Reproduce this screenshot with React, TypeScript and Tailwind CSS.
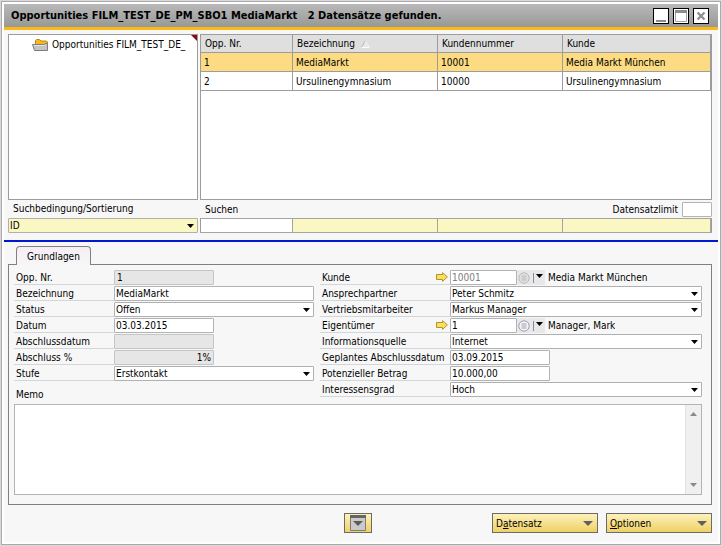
import { useState } from "react";
import type { ReactNode, SelectHTMLAttributes, InputHTMLAttributes } from "react";
import clsx from "clsx";

const opportunities = [
  { nr: "1", name: "MediaMarkt", customerNr: "10001", customer: "Media Markt München" },
  { nr: "2", name: "Ursulinengymnasium", customerNr: "10000", customer: "Ursulinengymnasium" },
];

const searchColumns = ["Opp. Nr.", "Bezeichnung", "Kundennummer", "Kunde"];

function CaretDown({ className = "w-[7px] h-1" }: { className?: string }) {
  return (
    <svg viewBox="0 0 8 4" preserveAspectRatio="none" className={className} fill="currentColor" aria-hidden="true">
      <path d="M0 0h8L4 4z" />
    </svg>
  );
}

function FolderIcon() {
  return (
    <svg viewBox="0 0 16 12" className="h-3 w-4 shrink-0" aria-hidden="true">
      <path d="M3.500 6V1.500L4.500.5h3l1.500 1.500h5.500l1 1V8z" fill="#fbb80f" stroke="#b08a30" />
      <path d="M.5 5.500h11.500L13 4.500h2.500v7H2.500z" fill="#c4c4c4" stroke="#7d7d7d" />
      <path d="M2 6.500h10" stroke="#e6e6e6" />
    </svg>
  );
}

function LinkArrow() {
  return (
    <svg viewBox="0 0 12 10" className="h-[10px] w-3" aria-hidden="true">
      <path d="M.5 2.500h6V.6L11.400 5 6.500 9.400V7.500h-6z" fill="#f7df60" stroke="#b4942a" />
    </svg>
  );
}

function ListIcon({ muted }: { muted?: boolean }) {
  const stroke = muted ? "#b8b8b8" : "#a0a0b0";
  return (
    <svg viewBox="0 0 12 12" className="h-3 w-3" aria-hidden="true">
      <circle cx="6" cy="6" r="5.200" fill={muted ? "#e2e2e2" : "#f3f3f8"} stroke={stroke} />
      <path d="M3.500 4h5M3.500 6h5M3.500 8h5" stroke={stroke} />
    </svg>
  );
}

function SelectBox({ className, options, ...rest }: SelectHTMLAttributes<HTMLSelectElement> & { options: string[] }) {
  return (
    <div className="relative w-full">
      <select
        {...rest}
        className={clsx(
          "block h-[15px] w-full appearance-none rounded-[1px] border border-[#b0b0b0] pl-px pr-4 leading-[13px] outline-none",
          className
        )}
      >
        {options.map((o) => (
          <option key={o}>{o}</option>
        ))}
      </select>
      <CaretDown className="pointer-events-none absolute right-1 top-[6px] h-1 w-[7px]" />
    </div>
  );
}

function TextBox({ className, ...rest }: InputHTMLAttributes<HTMLInputElement>) {
  return (
    <input
      type="text"
      {...rest}
      className={clsx(
        "block h-[15px] rounded-[1px] border px-px leading-[13px] outline-none",
        rest.readOnly ? "border-[#c3c6c6] bg-[#e6e6e6]" : "border-[#b0b4b4] bg-white",
        className
      )}
    />
  );
}

interface FieldProps {
  id: string;
  label: string;
  wide?: boolean;
  arrow?: boolean;
  children: ReactNode;
}

function Field({ id, label, wide, arrow, children }: FieldProps) {
  return (
    <div className="flex h-4">
      <div
        className={clsx(
          "flex h-[15px] shrink-0 items-center justify-between border-b border-[#d0d6da] pl-[2px]",
          wide ? "w-[130px]" : "w-[100px]"
        )}
      >
        <label htmlFor={id} className="whitespace-nowrap">
          {label}
        </label>
        {arrow && (
          <button type="button" aria-label={`${label} öffnen`} className="mr-[2px]">
            <LinkArrow />
          </button>
        )}
      </div>
      <div className="flex min-w-0 flex-1">{children}</div>
    </div>
  );
}

function LookupField({ id, value, text, disabled }: { id: string; value: string; text: string; disabled?: boolean }) {
  return (
    <>
      <TextBox id={id} defaultValue={value} className={clsx("w-[67px] shrink-0", disabled && "text-[#7c7c7c]")} />
      <div className="flex h-[15px] w-7 shrink-0 items-center bg-[#e8e8e8]">
        <button type="button" aria-label="Auswahlliste" className="pl-px">
          <ListIcon muted={disabled} />
        </button>
        <button
          type="button"
          aria-label="Verlauf"
          className="ml-[3px] flex h-[10px] items-start border-l border-[#7f8ea0] pl-[2px] pt-px"
        >
          <CaretDown />
        </button>
      </div>
      <span className="ml-[3px] truncate leading-[15px]">{text}</span>
    </>
  );
}

function TitleBar() {
  const button = "flex h-4 w-4 items-center justify-center border border-black bg-white";
  return (
    <header className="flex h-[26px] items-center justify-between border-b-3 border-[#fdb913] bg-linear-to-b from-[#b9b9b9] to-[#979997] pl-[7px] pr-[9px]">
      <h1 className="whitespace-pre text-[11px] font-bold leading-4">
        {"Opportunities FILM_TEST_DE_PM_SBO1 MediaMarkt   2 Datensätze gefunden."}
      </h1>
      <div className="flex gap-1">
        <button type="button" aria-label="Minimieren" className={button}>
          <svg viewBox="0 0 14 14" className="h-[14px] w-[14px]">
            <path d="M2 11h10v2H2z" fill="#8c8c8c" />
          </svg>
        </button>
        <button type="button" aria-label="Maximieren" className={button}>
          <svg viewBox="0 0 14 14" className="h-[14px] w-[14px]">
            <path d="M1.500 1.500h11v11h-11z" fill="#fff" stroke="#a5a5a5" />
            <path d="M1 1h12v3H1z" fill="#8c8c8c" />
          </svg>
        </button>
        <button type="button" aria-label="Schließen" className={button}>
          <svg viewBox="0 0 14 14" className="h-[14px] w-[14px]">
            <path d="M3.500 3.500l7 7M10.500 3.500l-7 7" stroke="#8c8c8c" strokeWidth="2.200" />
          </svg>
        </button>
      </div>
    </header>
  );
}

function ResultTable() {
  const [selected, setSelected] = useState("1");
  const line = "border-b border-r border-[#9c9c9c] p-0 text-left font-normal";
  const head = clsx(line, "h-[18px] pl-1");
  const cell = clsx(line, "h-[19px] pl-[3px]");

  return (
    <div className="h-[166px] border border-[#9c9c9c] bg-white">
      <table className="w-full table-fixed border-separate border-spacing-0">
        <colgroup>
          <col className="w-[92px]" />
          <col className="w-[145px]" />
          <col className="w-[125px]" />
          <col />
        </colgroup>
        <thead>
          <tr className="bg-[#dfdfdf]">
            <th className={head}>Opp. Nr.</th>
            <th className={head}>
              <span className="flex items-center gap-[6px]">
                Bezeichnung
                <svg viewBox="0 0 9 8" className="h-2 w-[9px]" aria-hidden="true">
                  <path d="M.5 7.500L4.500.5l4 7z" fill="#e9e9e9" stroke="#b8b8b8" />
                  <path d="M4.500.5l4 7H.5" fill="none" stroke="#fff" />
                </svg>
              </span>
            </th>
            <th className={head}>Kundennummer</th>
            <th className={head}>Kunde</th>
          </tr>
        </thead>
        <tbody>
          {opportunities.map((o) => (
            <tr
              key={o.nr}
              onClick={() => setSelected(o.nr)}
              className={selected === o.nr ? "bg-[#fcdb82]" : "bg-white"}
            >
              <td className={cell}>{o.nr}</td>
              <td className={cell}>{o.name}</td>
              <td className={cell}>{o.customerNr}</td>
              <td className={cell}>{o.customer}</td>
            </tr>
          ))}
        </tbody>
      </table>
    </div>
  );
}

function SearchArea() {
  return (
    <section className="flex gap-[2px] px-1 pt-1 pr-[6px]">
      <div className="w-[190px] shrink-0">
        <div className="relative h-[166px] border border-[#9c9c9c] bg-white pl-[23px] pt-[3px]">
          <div className="flex items-center gap-1 overflow-hidden whitespace-nowrap leading-[13px]">
            <FolderIcon />
            Opportunities FILM_TEST_DE_
          </div>
          <svg viewBox="0 0 6 6" className="absolute right-0 top-0 h-[6px] w-[6px]" aria-hidden="true">
            <path d="M0 0h6v6z" fill="#8b0a14" />
          </svg>
        </div>
        <label htmlFor="sort" className="block h-[18px] pl-[5px] leading-[18px]">
          Suchbedingung/Sortierung
        </label>
        <SelectBox id="sort" options={["ID"]} className="bg-[#fbf7c3]" />
      </div>

      <div className="min-w-0 flex-1">
        <ResultTable />
        <div className="flex h-[18px] items-center justify-between pl-[5px]">
          <span>Suchen</span>
          <label className="flex items-center gap-1">
            Datensatzlimit
            <TextBox className="w-[30px]" />
          </label>
        </div>
        <div className="flex border-l border-r border-[#9c9c9c]">
          {searchColumns.map((c, i) => (
            <input
              key={c}
              type="text"
              aria-label={`Suchen ${c}`}
              className={clsx(
                "block h-[15px] min-w-0 border-y border-r border-[#a5a5a5] px-px outline-none",
                i === 0 && "w-[92px] bg-white",
                i === 1 && "w-[145px] bg-[#fbf7c3]",
                i === 2 && "w-[125px] bg-[#fbf7c3]",
                i === 3 && "flex-1 bg-[#fbf7c3]"
              )}
            />
          ))}
        </div>
      </div>
    </section>
  );
}

function MemoBox() {
  return (
    <div className="mt-px flex h-[91px] border border-[#b4b4b4] bg-white">
      <textarea id="memo" className="block h-full min-w-0 flex-1 resize-none p-px outline-none" />
      <div className="flex w-4 flex-col items-center justify-between border-l border-[#e2e2e2] bg-[#f0f0f0] py-[7px] text-[#8a8a8a]">
        <button type="button" aria-label="Nach oben">
          <CaretDown className="h-1 w-[7px] rotate-180" />
        </button>
        <button type="button" aria-label="Nach unten">
          <CaretDown />
        </button>
      </div>
    </div>
  );
}

function DetailPanel() {
  return (
    <section className="px-1 pr-[6px] pt-1">
      <div role="tablist" className="flex pl-2">
        <button
          type="button"
          role="tab"
          aria-selected="true"
          className="relative -mb-px h-[19px] w-[75px] rounded-t border border-b-0 border-[#808080] bg-linear-to-b from-[#f5eef5] to-[#f7f7f7] leading-[17px]"
        >
          Grundlagen
        </button>
      </div>
      <div role="tabpanel" className="border border-[#808080] pb-[9px] pl-[5px] pr-[9px] pt-[5px]">
        <div className="flex gap-[6px]">
          <div className="w-[300px] shrink-0">
            <Field id="nr" label="Opp. Nr.">
              <TextBox id="nr" defaultValue="1" readOnly className="w-[100px] pl-[2px]" />
            </Field>
            <Field id="name" label="Bezeichnung">
              <TextBox id="name" defaultValue="MediaMarkt" className="w-full" />
            </Field>
            <Field id="status" label="Status">
              <SelectBox id="status" options={["Offen"]} className="bg-white" />
            </Field>
            <Field id="date" label="Datum">
              <TextBox id="date" defaultValue="03.03.2015" className="w-[100px]" />
            </Field>
            <Field id="closed" label="Abschlussdatum">
              <TextBox id="closed" readOnly className="w-[100px]" />
            </Field>
            <Field id="percent" label="Abschluss %">
              <TextBox id="percent" defaultValue="1%" readOnly className="w-[100px] pr-[2px] text-right" />
            </Field>
            <Field id="stage" label="Stufe">
              <SelectBox id="stage" options={["Erstkontakt"]} className="bg-white" />
            </Field>
            <label htmlFor="memo" className="mt-[5px] block h-4 pl-[2px] leading-4">
              Memo
            </label>
          </div>

          <div className="min-w-0 flex-1">
            <Field id="customer" label="Kunde" wide arrow>
              <LookupField id="customer" value="10001" text="Media Markt München" disabled />
            </Field>
            <Field id="contact" label="Ansprechpartner" wide>
              <SelectBox id="contact" options={["Peter Schmitz"]} className="bg-white" />
            </Field>
            <Field id="sales" label="Vertriebsmitarbeiter" wide>
              <SelectBox id="sales" options={["Markus Manager"]} className="bg-white" />
            </Field>
            <Field id="owner" label="Eigentümer" wide arrow>
              <LookupField id="owner" value="1" text="Manager, Mark" />
            </Field>
            <Field id="source" label="Informationsquelle" wide>
              <SelectBox id="source" options={["Internet"]} className="bg-white" />
            </Field>
            <Field id="planned" label="Geplantes Abschlussdatum" wide>
              <TextBox id="planned" defaultValue="03.09.2015" className="w-[100px]" />
            </Field>
            <Field id="amount" label="Potenzieller Betrag" wide>
              <TextBox id="amount" defaultValue="10.000,00" className="w-[100px]" />
            </Field>
            <Field id="interest" label="Interessensgrad" wide>
              <SelectBox id="interest" options={["Hoch"]} className="bg-white" />
            </Field>
          </div>
        </div>
        <MemoBox />
      </div>
    </section>
  );
}

function Footer() {
  const button = "flex h-5 items-center border border-[#6b6b6b] bg-linear-to-b from-[#fdf2b8] to-[#efd062]";
  return (
    <footer className="grid grid-cols-[1fr_auto_1fr] pb-[9px] pr-[6px] pt-2">
      <button type="button" aria-label="Formular ausklappen" className={clsx(button, "col-start-2 w-7 justify-center")}>
        <svg viewBox="0 0 16 16" className="h-4 w-4">
          <path d="M.5.5h15v15H.5z" fill="#cacaca" stroke="#7d7d7d" />
          <path d="M0 0h16v3H0z" fill="#666" />
          <path d="M3 6h10l-5 5z" fill="#5c5c5c" />
        </svg>
      </button>
      <div className="flex justify-end gap-2">
        <button type="button" className={clsx(button, "w-[106px] justify-between pl-[3px] pr-1")}>
          <span>
            D<u>a</u>tensatz
          </span>
          <CaretDown className="h-[5px] w-[10px] text-[#5f5f5f]" />
        </button>
        <button type="button" className={clsx(button, "w-[106px] justify-between pl-[3px] pr-1")}>
          <span>
            <u>O</u>ptionen
          </span>
          <CaretDown className="h-[5px] w-[10px] text-[#5f5f5f]" />
        </button>
      </div>
    </footer>
  );
}

export default function App() {
  return (
    <div className="bg-[#dcd9dc] p-px font-['DejaVu_Sans_Condensed','DejaVu_Sans',sans-serif] text-[10px] leading-[13px] text-black">
      <div className="border border-[#aaa8aa] bg-white p-[2px]">
        <div className="bg-[#f7f7f7]">
          <TitleBar />
          <SearchArea />
          <div className="mt-[7px] h-[2px] bg-[#0018d0]" />
          <DetailPanel />
          <Footer />
        </div>
      </div>
    </div>
  );
}
